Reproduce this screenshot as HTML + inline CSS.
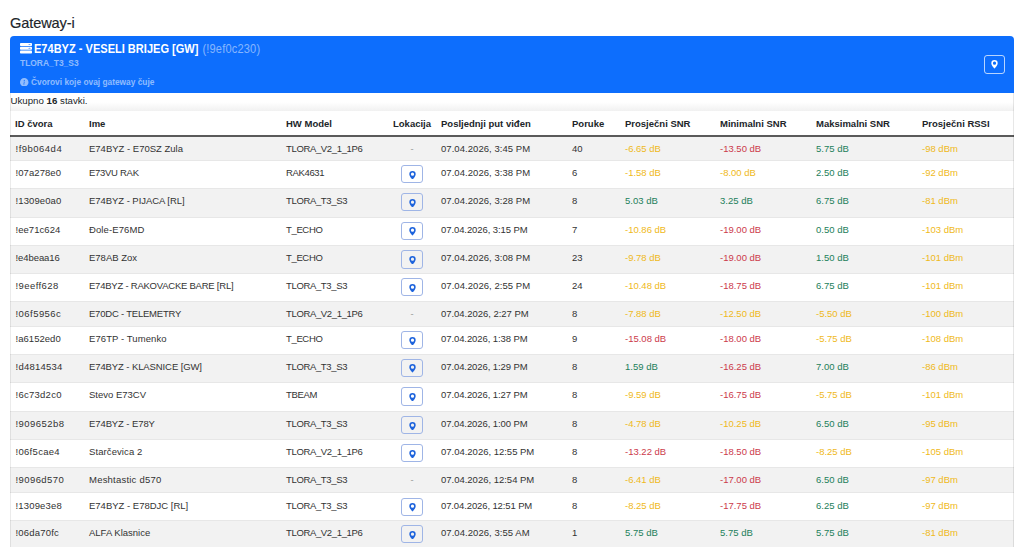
<!DOCTYPE html>
<html><head><meta charset="utf-8">
<style>
*{box-sizing:border-box;margin:0;padding:0}
html,body{width:1024px;height:547px;overflow:hidden;background:#fff}
body{font-family:"Liberation Sans",sans-serif;color:#212529;position:relative}
.h{position:absolute;left:10px;top:15px;font-size:14.6px;letter-spacing:-.12px;color:#212529;font-weight:normal;-webkit-text-stroke:.15px #212529}
.card{position:absolute;left:10px;top:36.2px;width:1004px;height:57.1px;background:#0d6efd;border-radius:4px 4px 0 0;color:#fff}
.title{position:absolute;left:24.2px;top:5.6px;font-size:12px;transform:scaleX(.92);transform-origin:0 0;font-weight:bold;white-space:nowrap}
.title .id{font-weight:normal;letter-spacing:.2px;margin-left:1px;color:rgba(255,255,255,.5)}
.hw{position:absolute;left:10px;top:22px;font-size:8.45px;font-weight:bold;color:rgba(255,255,255,.55)}
.info{position:absolute;left:10px;top:41px;font-size:8.35px;font-weight:bold;color:rgba(255,255,255,.55)}
.cbtn{position:absolute;left:974px;top:19.3px;width:21px;height:18.6px;border:1px solid rgba(255,255,255,.7);border-radius:3px}
.total{position:absolute;left:10.5px;top:95px;font-size:9.7px;color:#212529}
.tablewrap{position:absolute;left:10px;top:93px;width:1004px;height:460px;border-left:1px solid rgba(0,0,0,.08);border-right:1px solid rgba(0,0,0,.09);z-index:5}
.grad{position:absolute;left:10px;top:102px;width:1004px;height:9px;background:linear-gradient(#fff,#f1f1f1)}
table{position:absolute;left:10px;top:111px;width:1004px;border-collapse:separate;border-spacing:0;table-layout:fixed;font-size:9.5px}
th{font-weight:bold;text-align:left;height:26px;padding:0 5px;border-bottom:2px solid #5a5a5a;background:#fff}
td{padding:5.2px 5px 0;border-bottom:1px solid #e7e7e7;line-height:14px;vertical-align:top;color:#333;white-space:nowrap}
tr.s td{background:#f2f2f2}

.c{text-align:center;color:#999}
.btn{display:block;width:21.5px;height:18.3px;margin:-1.1px auto 0;border:1px solid #9fb5e6;border-radius:3px;position:relative}
.y{color:#efb91a}.r{color:#cc3a4b}.g{color:#23805a}
tbody td:nth-child(1){text-indent:.5px}
tbody td:nth-child(3){letter-spacing:-.35px}
tbody td:nth-child(5){letter-spacing:.05px}
</style></head><body>
<div class="h">Gateway-i</div>
<div class="card">
  <svg width="12" height="11" viewBox="0 0 12 11" style="position:absolute;left:10px;top:7px"><rect x="0" y="0" width="12" height="3" rx="0.8" fill="#fff"/><rect x="0" y="3.8" width="12" height="3" rx="0.8" fill="#fff"/><rect x="0" y="7.5" width="12" height="3" rx="0.8" fill="#fff"/><ellipse cx="9.5" cy="1.5" rx="1.1" ry="0.5" fill="#6a9ff5"/><ellipse cx="9.5" cy="5.3" rx="1.1" ry="0.5" fill="#6a9ff5"/></svg><div class="title">E74BYZ - VESELI BRIJEG [GW] <span class="id">(!9ef0c230)</span></div>
  <div class="hw">TLORA_T3_S3</div>
  <div class="info"><svg width="8.5" height="8.5" viewBox="0 0 16 16" style="position:absolute;left:0;top:0.5px"><path fill="rgba(255,255,255,.55)" d="M8 16A8 8 0 1 0 8 0a8 8 0 0 0 0 16m.93-9.412-1 4.705c-.07.34.029.533.304.533.194 0 .487-.07.686-.246l-.088.416c-.287.346-.92.598-1.465.598-.703 0-1.002-.422-.808-1.319l.738-3.468c.064-.293.006-.399-.287-.47l-.451-.081.082-.381 2.29-.287zM8 5.5a1 1 0 1 1 0-2 1 1 0 0 1 0 2"/></svg><span style="position:absolute;left:11px;top:0;white-space:nowrap">Čvorovi koje ovaj gateway čuje</span></div>
  <div class="cbtn"><svg width="7" height="8.5" viewBox="2 0 12 16" style="position:absolute;left:6.4px;top:4px"><path fill="#fff" d="M8 16s6-5.686 6-10A6 6 0 0 0 2 6c0 4.314 6 10 6 10m0-7a3 3 0 1 1 0-6 3 3 0 0 1 0 6"/></svg></div>
</div>
<div class="grad"></div>
<div class="total">Ukupno <b>16</b> stavki.</div>
<table>
<colgroup><col style="width:74px"><col style="width:197px"><col style="width:107px"><col style="width:48px"><col style="width:131px"><col style="width:53px"><col style="width:95px"><col style="width:96px"><col style="width:106px"><col style="width:97px"></colgroup>
<thead><tr><th>ID čvora</th><th>Ime</th><th>HW Model</th><th>Lokacija</th><th>Posljednji put viđen</th><th>Poruke</th><th>Prosječni SNR</th><th>Minimalni SNR</th><th>Maksimalni SNR</th><th>Prosječni RSSI</th></tr></thead>
<tbody>
<tr class="s" style="height:24px"><td style="letter-spacing:0.487px">!f9b064d4</td><td>E74BYZ - E70SZ Zula</td><td>TLORA_V2_1_1P6</td><td class="c">-</td><td>07.04.2026, 3:45 PM</td><td>40</td><td class="y">-6.65 dB</td><td class="r">-13.50 dB</td><td class="g">5.75 dB</td><td class="y">-98 dBm</td></tr>
<tr class="p" style="height:28px"><td style="letter-spacing:0.075px">!07a278e0</td><td style="letter-spacing:-0.287px">E73VU RAK</td><td>RAK4631</td><td class="c"><span class="btn"><svg width="7" height="8.5" viewBox="2 0 12 16" style="position:absolute;left:7px;top:4.5px"><path fill="#1d63dc" d="M8 16s6-5.686 6-10A6 6 0 0 0 2 6c0 4.314 6 10 6 10m0-7a3 3 0 1 1 0-6 3 3 0 0 1 0 6"/></svg></span></td><td>07.04.2026, 3:38 PM</td><td>6</td><td class="y">-1.58 dB</td><td class="y">-8.00 dB</td><td class="g">2.50 dB</td><td class="y">-92 dBm</td></tr>
<tr class="s p" style="height:28.5px"><td style="letter-spacing:0.112px">!1309e0a0</td><td style="letter-spacing:-0.053px">E74BYZ - PIJACA [RL]</td><td>TLORA_T3_S3</td><td class="c"><span class="btn"><svg width="7" height="8.5" viewBox="2 0 12 16" style="position:absolute;left:7px;top:4.5px"><path fill="#1d63dc" d="M8 16s6-5.686 6-10A6 6 0 0 0 2 6c0 4.314 6 10 6 10m0-7a3 3 0 1 1 0-6 3 3 0 0 1 0 6"/></svg></span></td><td>07.04.2026, 3:28 PM</td><td>8</td><td class="g">5.03 dB</td><td class="g">3.25 dB</td><td class="g">6.75 dB</td><td class="y">-81 dBm</td></tr>
<tr class="p" style="height:28.7px"><td style="letter-spacing:0.050px">!ee71c624</td><td style="letter-spacing:0.111px">Đole-E76MD</td><td>T_ECHO</td><td class="c"><span class="btn"><svg width="7" height="8.5" viewBox="2 0 12 16" style="position:absolute;left:7px;top:4.5px"><path fill="#1d63dc" d="M8 16s6-5.686 6-10A6 6 0 0 0 2 6c0 4.314 6 10 6 10m0-7a3 3 0 1 1 0-6 3 3 0 0 1 0 6"/></svg></span></td><td style="letter-spacing:-0.089px">07.04.2026, 3:15 PM</td><td>7</td><td class="y">-10.86 dB</td><td class="r">-19.00 dB</td><td class="g">0.50 dB</td><td class="y">-103 dBm</td></tr>
<tr class="s p" style="height:27.8px"><td style="letter-spacing:-0.075px">!e4beaa16</td><td>E78AB Zox</td><td>T_ECHO</td><td class="c"><span class="btn"><svg width="7" height="8.5" viewBox="2 0 12 16" style="position:absolute;left:7px;top:4.5px"><path fill="#1d63dc" d="M8 16s6-5.686 6-10A6 6 0 0 0 2 6c0 4.314 6 10 6 10m0-7a3 3 0 1 1 0-6 3 3 0 0 1 0 6"/></svg></span></td><td>07.04.2026, 3:08 PM</td><td>23</td><td class="y">-9.78 dB</td><td class="r">-19.00 dB</td><td class="g">1.50 dB</td><td class="y">-101 dBm</td></tr>
<tr class="p" style="height:28px"><td style="letter-spacing:0.412px">!9eeff628</td><td style="letter-spacing:-0.230px">E74BYZ - RAKOVACKE BARE [RL]</td><td>TLORA_T3_S3</td><td class="c"><span class="btn"><svg width="7" height="8.5" viewBox="2 0 12 16" style="position:absolute;left:7px;top:4.5px"><path fill="#1d63dc" d="M8 16s6-5.686 6-10A6 6 0 0 0 2 6c0 4.314 6 10 6 10m0-7a3 3 0 1 1 0-6 3 3 0 0 1 0 6"/></svg></span></td><td>07.04.2026, 2:55 PM</td><td>24</td><td class="y">-10.48 dB</td><td class="r">-18.75 dB</td><td class="g">6.75 dB</td><td class="y">-101 dBm</td></tr>
<tr class="s" style="height:25px"><td style="letter-spacing:0.450px">!06f5956c</td><td style="letter-spacing:-0.212px">E70DC - TELEMETRY</td><td>TLORA_V2_1_1P6</td><td class="c">-</td><td style="letter-spacing:-0.033px">07.04.2026, 2:27 PM</td><td>8</td><td class="y">-7.88 dB</td><td class="y">-12.50 dB</td><td class="y">-5.50 dB</td><td class="y">-100 dBm</td></tr>
<tr class="p" style="height:27.8px"><td style="letter-spacing:0.037px">!a6152ed0</td><td style="letter-spacing:0.079px">E76TP - Tumenko</td><td>T_ECHO</td><td class="c"><span class="btn"><svg width="7" height="8.5" viewBox="2 0 12 16" style="position:absolute;left:7px;top:4.5px"><path fill="#1d63dc" d="M8 16s6-5.686 6-10A6 6 0 0 0 2 6c0 4.314 6 10 6 10m0-7a3 3 0 1 1 0-6 3 3 0 0 1 0 6"/></svg></span></td><td style="letter-spacing:-0.089px">07.04.2026, 1:38 PM</td><td>9</td><td class="r">-15.08 dB</td><td class="r">-18.00 dB</td><td class="y">-5.75 dB</td><td class="y">-108 dBm</td></tr>
<tr class="s p" style="height:28.5px"><td style="letter-spacing:0.237px">!d4814534</td><td style="letter-spacing:-0.100px">E74BYZ - KLASNICE [GW]</td><td>TLORA_T3_S3</td><td class="c"><span class="btn"><svg width="7" height="8.5" viewBox="2 0 12 16" style="position:absolute;left:7px;top:4.5px"><path fill="#1d63dc" d="M8 16s6-5.686 6-10A6 6 0 0 0 2 6c0 4.314 6 10 6 10m0-7a3 3 0 1 1 0-6 3 3 0 0 1 0 6"/></svg></span></td><td style="letter-spacing:-0.089px">07.04.2026, 1:29 PM</td><td>8</td><td class="g">1.59 dB</td><td class="r">-16.25 dB</td><td class="g">7.00 dB</td><td class="y">-86 dBm</td></tr>
<tr class="p" style="height:28.7px"><td style="letter-spacing:0.263px">!6c73d2c0</td><td>Stevo E73CV</td><td>TBEAM</td><td class="c"><span class="btn"><svg width="7" height="8.5" viewBox="2 0 12 16" style="position:absolute;left:7px;top:4.5px"><path fill="#1d63dc" d="M8 16s6-5.686 6-10A6 6 0 0 0 2 6c0 4.314 6 10 6 10m0-7a3 3 0 1 1 0-6 3 3 0 0 1 0 6"/></svg></span></td><td style="letter-spacing:-0.089px">07.04.2026, 1:27 PM</td><td>8</td><td class="y">-9.59 dB</td><td class="r">-16.75 dB</td><td class="y">-5.75 dB</td><td class="y">-101 dBm</td></tr>
<tr class="s p" style="height:28px"><td style="letter-spacing:0.463px">!909652b8</td><td style="letter-spacing:-0.092px">E74BYZ - E78Y</td><td>TLORA_T3_S3</td><td class="c"><span class="btn"><svg width="7" height="8.5" viewBox="2 0 12 16" style="position:absolute;left:7px;top:4.5px"><path fill="#1d63dc" d="M8 16s6-5.686 6-10A6 6 0 0 0 2 6c0 4.314 6 10 6 10m0-7a3 3 0 1 1 0-6 3 3 0 0 1 0 6"/></svg></span></td><td style="letter-spacing:-0.089px">07.04.2026, 1:00 PM</td><td>8</td><td class="y">-4.78 dB</td><td class="y">-10.25 dB</td><td class="g">6.50 dB</td><td class="y">-95 dBm</td></tr>
<tr class="p" style="height:28px"><td style="letter-spacing:0.300px">!06f5cae4</td><td style="letter-spacing:0.091px">Starčevica 2</td><td>TLORA_V2_1_1P6</td><td class="c"><span class="btn"><svg width="7" height="8.5" viewBox="2 0 12 16" style="position:absolute;left:7px;top:4.5px"><path fill="#1d63dc" d="M8 16s6-5.686 6-10A6 6 0 0 0 2 6c0 4.314 6 10 6 10m0-7a3 3 0 1 1 0-6 3 3 0 0 1 0 6"/></svg></span></td><td style="letter-spacing:-0.011px">07.04.2026, 12:55 PM</td><td>8</td><td class="r">-13.22 dB</td><td class="r">-18.50 dB</td><td class="y">-8.25 dB</td><td class="y">-105 dBm</td></tr>
<tr class="s" style="height:25.5px"><td style="letter-spacing:0.412px">!9096d570</td><td style="letter-spacing:0.214px">Meshtastic d570</td><td>TLORA_T3_S3</td><td class="c">-</td><td style="letter-spacing:-0.011px">07.04.2026, 12:54 PM</td><td>8</td><td class="y">-6.41 dB</td><td class="r">-17.00 dB</td><td class="g">6.50 dB</td><td class="y">-97 dBm</td></tr>
<tr class="p" style="height:27.5px"><td style="letter-spacing:0.162px">!1309e3e8</td><td>E74BYZ - E78DJC [RL]</td><td>TLORA_T3_S3</td><td class="c"><span class="btn"><svg width="7" height="8.5" viewBox="2 0 12 16" style="position:absolute;left:7px;top:4.5px"><path fill="#1d63dc" d="M8 16s6-5.686 6-10A6 6 0 0 0 2 6c0 4.314 6 10 6 10m0-7a3 3 0 1 1 0-6 3 3 0 0 1 0 6"/></svg></span></td><td style="letter-spacing:-0.117px">07.04.2026, 12:51 PM</td><td>8</td><td class="y">-8.25 dB</td><td class="r">-17.75 dB</td><td class="g">6.25 dB</td><td class="y">-97 dBm</td></tr>
<tr class="s p" style="height:28.3px"><td style="letter-spacing:0.200px">!06da70fc</td><td>ALFA Klasnice</td><td>TLORA_V2_1_1P6</td><td class="c"><span class="btn"><svg width="7" height="8.5" viewBox="2 0 12 16" style="position:absolute;left:7px;top:4.5px"><path fill="#1d63dc" d="M8 16s6-5.686 6-10A6 6 0 0 0 2 6c0 4.314 6 10 6 10m0-7a3 3 0 1 1 0-6 3 3 0 0 1 0 6"/></svg></span></td><td>07.04.2026, 3:55 AM</td><td>1</td><td class="g">5.75 dB</td><td class="g">5.75 dB</td><td class="g">5.75 dB</td><td class="y">-81 dBm</td></tr>
</tbody></table>
<div class="tablewrap"></div>
</body></html>
